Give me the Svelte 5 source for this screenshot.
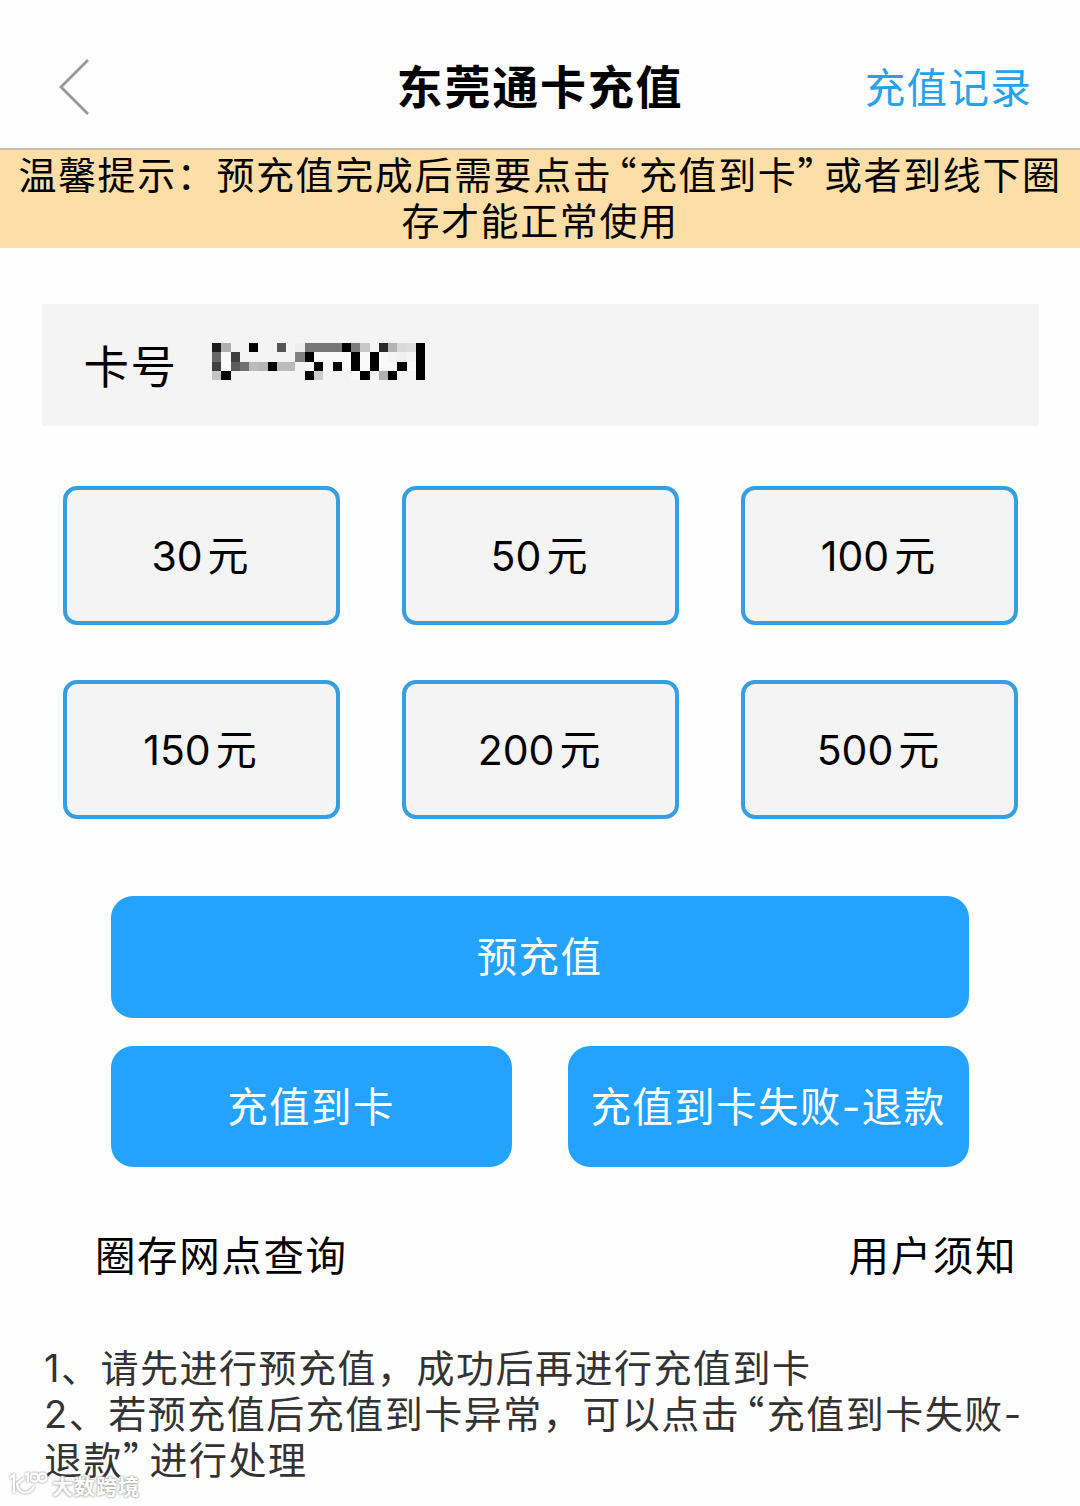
<script>
  let amounts = [30, 50, 100, 150, 200, 500]
  let selected = null

  // Masked card number, one hex grey level per mosaic cell
  const cell = 9.27
  const mask = [
    ['1e', 'b0', 'f3', 'f3', '00', '', '', '55', '', 'ee', '77', '77', '77', '77', '00', '7c', 'c8', '', '2b', 'b4', 'da', 'dd', '00'],
    ['68', 'f9', '40', '', '', '', '', '', '', '80', '00', 'f9', 'f9', 'f9', 'f9', '00', 'f9', '00', 'f9', '', 'f0', '', '00'],
    ['40', 'fb', '5c', '70', 'bb', 'b6', '00', 'bb', 'bb', '', 'f9', '00', 'f9', '00', 'f9', '00', 'f9', '00', 'f9', 'f9', '00', 'f9', '00'],
    ['c4', '00', '', '', '', '', '', '', '', '', '00', 'cc', '', '', '', 'f9', '00', '', 'b0', '00', '', '', '00']
  ]

  function selectAmount(amount) {
    selected = amount
  }
</script>

<div class="page">
  <header class="header">
    <button class="back" aria-label="返回">
      <svg width="34" height="60" viewBox="0 0 34 60">
        <path d="M31 3 L4 30 L31 57" fill="none" stroke="#999" stroke-width="2.8" />
      </svg>
    </button>
    <h1>东莞通卡充值</h1>
    <a class="records" href="#records">充值记录</a>
  </header>

  <div class="notice">
    温馨提示：预充值完成后需要点击<span class="open">“</span>充值到卡<span class="close">”</span>或者到线下圈<br>存才能正常使用
  </div>

  <div class="card-number">
    <span>卡号</span>
    <svg class="mask" width="213.2" height="37.1" shape-rendering="crispEdges">
      {#each mask as row, y}
        {#each row as level, x}
          {#if level}
            <rect x={x * cell} y={y * cell} width={cell} height={cell} fill={'#' + level.repeat(3)} />
          {/if}
        {/each}
      {/each}
    </svg>
  </div>

  <div class="amounts">
    {#each amounts as amount}
      <button class="amount" aria-pressed={selected === amount} on:click={() => selectAmount(amount)}>
        {amount}<span class="unit">元</span>
      </button>
    {/each}
  </div>

  <div class="actions">
    <button class="action wide">预充值</button>
    <button class="action">充值到卡</button>
    <button class="action">充值到卡失败-退款</button>
  </div>

  <nav class="links">
    <a href="#outlets">圈存网点查询</a>
    <a href="#terms">用户须知</a>
  </nav>

  <div class="tips">
    <p>1、请先进行预充值，成功后再进行充值到卡</p>
    <p>2、若预充值后充值到卡异常，可以点击<span class="open">“</span>充值到卡失败-<br>退款<span class="close">”</span>进行处理</p>
  </div>

  <div class="watermark">
    <svg width="42" height="30" viewBox="0 0 42 30" fill="none" stroke="#fff" stroke-width="2.4">
      <path d="M2 9 L6 6 V24 M16 9 L9 15 C10 22 15 25 20 23 C23 22 25 20 26 17" />
      <path d="M17 6 L20 4.5 V13" />
      <circle cx="26.5" cy="8.5" r="4" />
      <circle cx="34.5" cy="8.5" r="4" />
    </svg>
    <span>大数跨境</span>
  </div>
</div>

<style>
  :global(body) {
    background: #fefefe;
  }

  .page {
    position: relative;
    width: 1080px;
    height: 1506px;
    overflow: hidden;
    background: #fefefe;
    color: #000;
    font-family: Inter, "Noto Sans CJK SC", sans-serif;
  }

  button {
    margin: 0;
    padding: 0;
    border: none;
    background: none;
    color: inherit;
    font-family: inherit;
    cursor: pointer;
  }

  a {
    color: inherit;
    text-decoration: none;
  }

  .header {
    display: grid;
    grid-template-columns: 1fr auto 1fr;
    align-items: center;
    box-sizing: border-box;
    height: 150px;
    padding: 26px 48px 0;
    border-bottom: 2px solid #c9bda4;
  }

  .back {
    justify-self: start;
    height: 60px;
    margin-left: 9px;
  }

  .back svg {
    display: block;
  }

  h1 {
    margin: 0;
    font-size: 46px;
    font-weight: 700;
    line-height: 60px;
    letter-spacing: 1.8px;
  }

  .records {
    justify-self: end;
    padding-top: 4px;
    color: #24a2f0;
    font-size: 40.5px;
    line-height: 60px;
    letter-spacing: 1.3px;
  }

  .notice {
    height: 98px;
    box-sizing: border-box;
    padding-top: 2px;
    background: #fcdea6;
    font-size: 38px;
    line-height: 46px;
    letter-spacing: 1.6px;
    text-align: center;
    white-space: nowrap;
  }

  /* half-width curly quotes, spaced on their outer side */
  .open,
  .close {
    font-family: "Noto Sans CJK SC", sans-serif;
    font-feature-settings: "halt";
    line-height: 0;
  }

  .open {
    margin: 0 1px 0 5px;
  }

  .close {
    margin-right: 6px;
  }

  .card-number {
    display: flex;
    align-items: center;
    gap: 35px;
    height: 122px;
    margin: 55.5px 41.5px 0;
    padding-left: 42px;
    background: #f4f4f4;
    font-size: 45.5px;
    letter-spacing: 1.4px;
  }

  .card-number span {
    padding-bottom: 1px;
  }

  .mask {
    margin-bottom: 5px;
  }

  .amounts {
    display: grid;
    grid-template-columns: repeat(3, 277px);
    justify-content: space-between;
    row-gap: 55px;
    margin: 60.5px 62px 0 63px;
  }

  .amount {
    height: 139px;
    padding: 0 3px 5px 0;
    border: 4px solid #369fe2;
    border-radius: 14px;
    background: #f4f4f4;
    font-size: 41px;
  }

  .unit {
    margin-left: 5px;
  }

  .actions {
    display: grid;
    grid-template-columns: 1fr 1fr;
    gap: 28px 56px;
    margin: 77px 111px 0;
  }

  .action {
    height: 121.5px;
    padding: 0 1px 4px 0;
    border-radius: 22px;
    background: #24a2ff;
    color: #fff;
    font-size: 40.5px;
    letter-spacing: 1.4px;
    white-space: nowrap;
  }

  .wide {
    grid-column: span 2;
  }

  .links {
    display: flex;
    justify-content: space-between;
    margin: 60px 63px 0 95px;
    font-size: 40.5px;
    line-height: 60px;
    letter-spacing: 1.6px;
  }

  .tips {
    margin: 58px 0 0 44px;
    color: #333;
    font-size: 38px;
    line-height: 46px;
    letter-spacing: 1.5px;
    white-space: nowrap;
  }

  .tips p {
    margin: 0;
  }

  .watermark {
    position: absolute;
    left: 8px;
    bottom: 4px;
    display: flex;
    align-items: center;
    gap: 2px;
    color: #fff;
    font-size: 21px;
    font-weight: 700;
    line-height: 30px;
    letter-spacing: 1px;
    text-shadow: 0 0 2px #999, 0 0 3px #aaa;
  }

  .watermark svg {
    filter: drop-shadow(0 0 1.2px #888);
  }

  .watermark span {
    padding-top: 6px;
  }
</style>
